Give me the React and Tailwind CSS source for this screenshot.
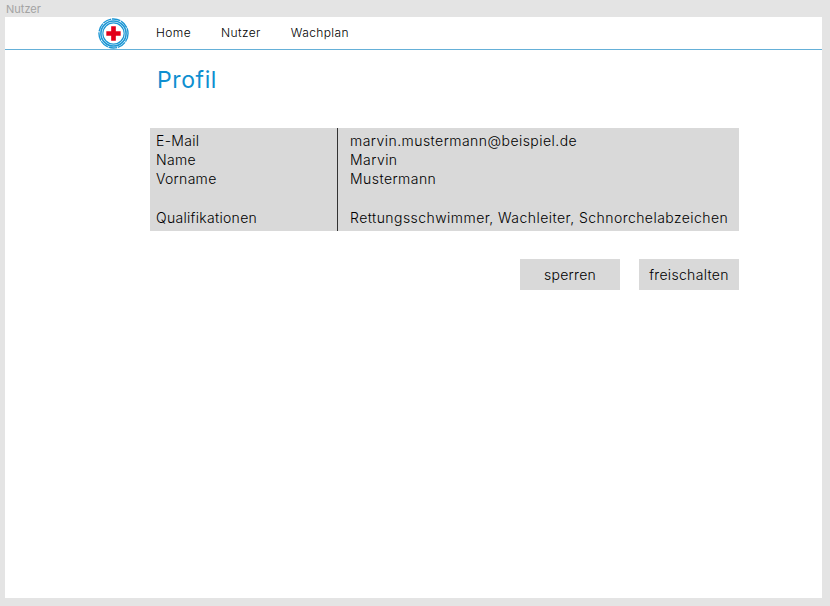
import React from "react"

const Logo = () => (
  <svg width="31" height="31" viewBox="0 0 32 32" className="shrink-0">
    <circle cx="16" cy="16" r="15" fill="none" stroke="#1c96d4" strokeWidth="1.4" strokeDasharray="9 0.8" />
    <circle cx="16" cy="16" r="13" fill="none" stroke="#1c96d4" strokeWidth="1.6" />
    <circle cx="16" cy="16" r="11" fill="none" stroke="#1c96d4" strokeWidth="1.2" />
    <circle cx="16" cy="16" r="9.6" fill="#fff" />
    <path d="M13.6 8.6h4.8v5h5v4.8h-5v5h-4.8v-5h-5v-4.8h5z" fill="#e2001a" />
  </svg>
)

const rows = [
  ["E-Mail", "marvin.mustermann@beispiel.de"],
  ["Name", "Marvin"],
  ["Vorname", "Mustermann"],
  ["\u00a0", "\u00a0"],
  ["Qualifikationen", "Rettungsschwimmer, Wachleiter, Schnorchelabzeichen"],
]

export default function App() {
  return (
    <div className="w-[830px] h-[606px] bg-[#e4e4e4] flex flex-col overflow-hidden font-['Inter',sans-serif]">
      <div className="h-[17px] pl-[6px] text-[11px] leading-[18px] text-[#a3a3a3]">Nutzer</div>
      <div className="w-[817px] h-[581px] ml-[5px] bg-white">
        <div className="h-[33px] border-b border-[#65b0d8] flex items-center pl-[93px]">
          <Logo />
          <nav className="flex ml-[27px] gap-[30px] text-[12px] tracking-[0.4px] font-light text-black">
            <span>Home</span>
            <span>Nutzer</span>
            <span>Wachplan</span>
          </nav>
        </div>
        <div className="pl-[145px] w-[734px]">
          <h1 className="pl-[7px] pt-[15px] h-[78px] text-[23px] leading-[30px] tracking-[0.6px] text-[#0f8fd0]">Profil</h1>
          <div className="bg-[#d9d9d9] flex h-[103px] text-[14px] leading-[19.2px] font-light text-black">
            <div className="w-[188px] pl-[6px] border-r border-[#333] pt-[3px] tracking-[0.3px]">
              {rows.map((r, i) => <div key={i}>{r[0]}</div>)}
            </div>
            <div className="pl-[12px] pt-[3px] whitespace-nowrap tracking-[0.45px]">
              {rows.map((r, i) => <div key={i}>{r[1]}</div>)}
            </div>
          </div>
          <div className="flex justify-end gap-[19px] mt-[28px] text-[14px] tracking-[0.3px] font-light text-black">
            <button className="w-[100px] h-[31px] bg-[#d9d9d9]">sperren</button>
            <button className="w-[100px] h-[31px] bg-[#d9d9d9]">freischalten</button>
          </div>
        </div>
      </div>
    </div>
  )
}
